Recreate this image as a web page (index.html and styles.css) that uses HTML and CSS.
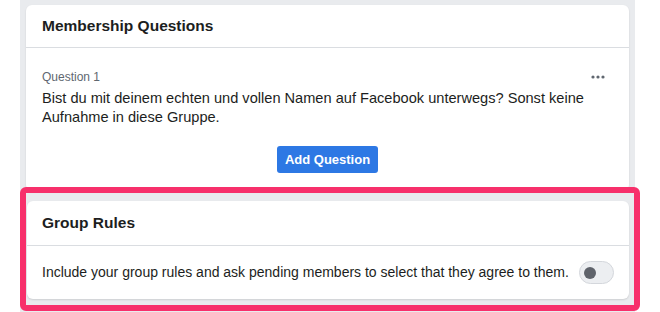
FILE: index.html
```html
<!DOCTYPE html>
<html lang="en">
<head>
<meta charset="utf-8">
<title>Membership Questions</title>
<link rel="stylesheet" href="styles.css">
</head>
<body>
<div class="panel">
  <section class="card card-questions">
    <header class="card-header"><h2 class="card-title">Membership Questions</h2></header>
    <div class="card-body questions-body">
      <div class="question-row">
        <div class="question-label">Question 1</div>
        <button class="more-btn" aria-label="More">
          <svg width="14" height="4" viewBox="0 0 14 4"><circle cx="2" cy="2" r="1.6" fill="#606770"/><circle cx="7" cy="2" r="1.6" fill="#606770"/><circle cx="12" cy="2" r="1.6" fill="#606770"/></svg>
        </button>
      </div>
      <p class="question-text">Bist du mit deinem echten und vollen Namen auf Facebook unterwegs? Sonst keine Aufnahme in diese Gruppe.</p>
      <div class="actions"><button class="primary-btn">Add Question</button></div>
    </div>
  </section>
  <section class="card card-rules">
    <header class="card-header rules-header"><h2 class="card-title">Group Rules</h2></header>
    <div class="card-body rules-body">
      <span class="rules-text">Include your group rules and ask pending members to select that they agree to them.</span>
      <span class="toggle"><span class="knob"></span></span>
    </div>
  </section>
</div>
<div class="highlight"></div>
</body>
</html>
```
FILE: styles.css
```css
html, body {
  margin: 0;
  padding: 0;
  background: #ffffff;
  font-family: "Liberation Sans", Arial, sans-serif;
  color: #1c1e21;
  overflow: hidden;
}

.panel {
  margin-left: 20px;
  width: 615px;
  height: 312px;
  box-sizing: border-box;
  padding: 5px 6px 0 6px;
  background: #e9ebee;
  display: flex;
  flex-direction: column;
  gap: 10px;
}

.card {
  background: #ffffff;
  border-radius: 6px;
  box-shadow: 0 1px 2px rgba(0, 0, 0, 0.12);
}

.card-rules {
  margin-left: 1px;
}

.card-header {
  padding: 11px 16px;
  border-bottom: 1px solid #dadde1;
}

.rules-header {
  padding: 12px 15px 12px 15px;
}

.card-title {
  margin: 0;
  font-size: 15.5px;
  line-height: 20px;
  font-weight: bold;
  color: #1c1e21;
}

.questions-body {
  padding: 21px 16px 18px 16px;
}

.question-row {
  display: flex;
  justify-content: space-between;
  align-items: center;
}

.question-label {
  font-size: 12px;
  line-height: 16px;
  color: #606770;
}

.more-btn {
  border: 0;
  background: none;
  padding: 0;
  margin-right: 8px;
  width: 14px;
  height: 16px;
  display: flex;
  align-items: center;
}

.question-text {
  margin: 4px 0 0 0;
  font-size: 14.6px;
  line-height: 19px;
  color: #1c1e21;
}

.actions {
  margin-top: 19px;
  display: flex;
  justify-content: center;
}

.primary-btn {
  width: 101px;
  height: 27px;
  border: 0;
  border-radius: 3px;
  background: #2d78e4;
  color: #ffffff;
  font-family: "Liberation Sans", Arial, sans-serif;
  font-weight: bold;
  font-size: 13px;
  padding: 0;
}

.rules-body {
  padding: 15px 15px 15px 15px;
  display: flex;
  align-items: center;
  justify-content: space-between;
}

.rules-text {
  font-size: 14px;
  line-height: 19px;
}

.toggle {
  width: 29px;
  height: 21px;
  border: 1px solid #d4d7dc;
  border-radius: 12px;
  background: #eceef1;
  display: flex;
  align-items: center;
  padding-left: 4px;
  box-sizing: content-box;
  flex: none;
}

.knob {
  width: 12px;
  height: 12px;
  border-radius: 50%;
  background: #5f636b;
}

.highlight {
  position: absolute;
  left: 20px;
  top: 187px;
  width: 620px;
  height: 124px;
  box-sizing: border-box;
  border: 6px solid #f7306b;
  border-radius: 6px;
  pointer-events: none;
}
```
